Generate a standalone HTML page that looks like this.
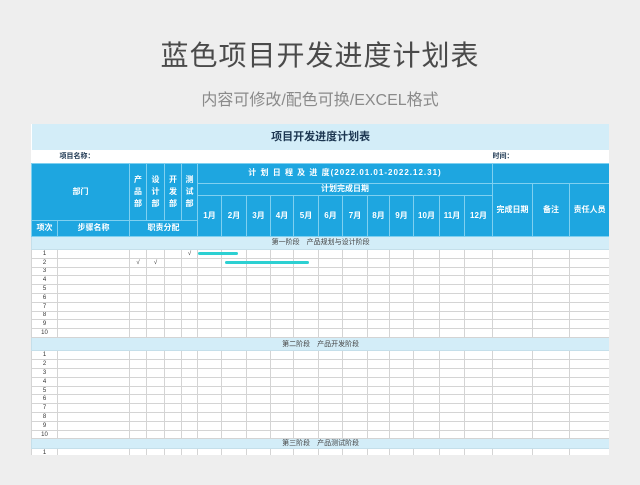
<!DOCTYPE html>
<html><head><meta charset="utf-8">
<style>
*{margin:0;padding:0;box-sizing:border-box}
body{width:640px;height:485px;background:#eeeeee;font-family:"Liberation Sans","Noto Sans CJK SC",sans-serif;position:relative;overflow:hidden}
.h1{position:absolute;top:34px;left:0;width:640px;text-align:center;font-size:28px;color:#4a4a4a;letter-spacing:1px}
.h2{position:absolute;top:86px;left:0;width:640px;text-align:center;font-size:16px;color:#8a8a8a}
.wrap{position:absolute;left:31px;top:124px;width:578px;height:331px;overflow:hidden}
table{border-collapse:collapse;table-layout:fixed;width:578px;background:#fff}
td{padding:0;overflow:hidden;white-space:nowrap;text-align:center;font-size:6px;color:#333;border:1px solid #d4d4d4;line-height:1}
.t td{background:#d3edf8;border:none;font-size:11px;font-weight:bold;color:#1b3550;height:26px}
.i td{border:none;font-size:7px;font-weight:bold;color:#1b3550;height:13px;text-align:left}
.b td,td.b{background:#1ea6e0;color:#fff;font-weight:bold;border:1px solid #7fd0f0;font-size:8px}
.s td{background:#d3edf8;height:13.5px;border-color:#c5dfea;font-size:7px;color:#444}
.s.last td{height:10px}
.r td{height:8.8px;font-size:6px}
.bar{position:absolute;height:3px;background:#2cd0d2;border-radius:2px}
</style></head><body>
<div class="h1">蓝色项目开发进度计划表</div>
<div class="h2">内容可修改/配色可换/EXCEL格式</div>
<div class="wrap">
<table>
<colgroup><col style="width:26px"><col style="width:72px"><col style="width:17px"><col style="width:18px"><col style="width:17px"><col style="width:16px">
<col style="width:24px"><col style="width:25px"><col style="width:24px"><col style="width:23px"><col style="width:25px"><col style="width:24px"><col style="width:25px"><col style="width:22px"><col style="width:24px"><col style="width:26px"><col style="width:25px"><col style="width:28px">
<col style="width:40px"><col style="width:37px"><col style="width:40px"></colgroup>
<tr class="t"><td colspan="21">项目开发进度计划表</td></tr>
<tr class="i"><td></td><td colspan="17">&nbsp;项目名称：</td><td colspan="3">时间：</td></tr>
<tr class="b" style="height:20px"><td colspan="2" rowspan="3">部门</td><td rowspan="3" style="line-height:1.5">产<br>品<br>部</td><td rowspan="3" style="line-height:1.5">设<br>计<br>部</td><td rowspan="3" style="line-height:1.5">开<br>发<br>部</td><td rowspan="3" style="line-height:1.5">测<br>试<br>部</td><td colspan="12" style="letter-spacing:1px">计 划 日 程 及 进 度(2022.01.01-2022.12.31)</td><td colspan="3"></td></tr>
<tr class="b" style="height:12px"><td colspan="12">计划完成日期</td><td rowspan="3">完成日期</td><td rowspan="3">备注</td><td rowspan="3">责任人员</td></tr>
<tr class="b" style="height:25px"><td rowspan="2">1月</td><td rowspan="2">2月</td><td rowspan="2">3月</td><td rowspan="2">4月</td><td rowspan="2">5月</td><td rowspan="2">6月</td><td rowspan="2">7月</td><td rowspan="2">8月</td><td rowspan="2">9月</td><td rowspan="2">10月</td><td rowspan="2">11月</td><td rowspan="2">12月</td></tr>
<tr class="b" style="height:16px"><td>项次</td><td>步骤名称</td><td colspan="4">职责分配</td></tr>
<tr class="s"><td colspan="21">第一阶段　产品规划与设计阶段</td></tr>
<tr class="r"><td>1</td><td></td><td></td><td></td><td></td><td>√</td><td></td><td></td><td></td><td></td><td></td><td></td><td></td><td></td><td></td><td></td><td></td><td></td><td></td><td></td><td></td></tr>
<tr class="r"><td>2</td><td></td><td>√</td><td>√</td><td></td><td></td><td></td><td></td><td></td><td></td><td></td><td></td><td></td><td></td><td></td><td></td><td></td><td></td><td></td><td></td><td></td></tr>
<tr class="r"><td>3</td><td></td><td></td><td></td><td></td><td></td><td></td><td></td><td></td><td></td><td></td><td></td><td></td><td></td><td></td><td></td><td></td><td></td><td></td><td></td><td></td></tr>
<tr class="r"><td>4</td><td></td><td></td><td></td><td></td><td></td><td></td><td></td><td></td><td></td><td></td><td></td><td></td><td></td><td></td><td></td><td></td><td></td><td></td><td></td><td></td></tr>
<tr class="r"><td>5</td><td></td><td></td><td></td><td></td><td></td><td></td><td></td><td></td><td></td><td></td><td></td><td></td><td></td><td></td><td></td><td></td><td></td><td></td><td></td><td></td></tr>
<tr class="r"><td>6</td><td></td><td></td><td></td><td></td><td></td><td></td><td></td><td></td><td></td><td></td><td></td><td></td><td></td><td></td><td></td><td></td><td></td><td></td><td></td><td></td></tr>
<tr class="r"><td>7</td><td></td><td></td><td></td><td></td><td></td><td></td><td></td><td></td><td></td><td></td><td></td><td></td><td></td><td></td><td></td><td></td><td></td><td></td><td></td><td></td></tr>
<tr class="r"><td>8</td><td></td><td></td><td></td><td></td><td></td><td></td><td></td><td></td><td></td><td></td><td></td><td></td><td></td><td></td><td></td><td></td><td></td><td></td><td></td><td></td></tr>
<tr class="r"><td>9</td><td></td><td></td><td></td><td></td><td></td><td></td><td></td><td></td><td></td><td></td><td></td><td></td><td></td><td></td><td></td><td></td><td></td><td></td><td></td><td></td></tr>
<tr class="r"><td>10</td><td></td><td></td><td></td><td></td><td></td><td></td><td></td><td></td><td></td><td></td><td></td><td></td><td></td><td></td><td></td><td></td><td></td><td></td><td></td><td></td></tr>
<tr class="s"><td colspan="21">第二阶段　产品开发阶段</td></tr>
<tr class="r"><td>1</td><td></td><td></td><td></td><td></td><td></td><td></td><td></td><td></td><td></td><td></td><td></td><td></td><td></td><td></td><td></td><td></td><td></td><td></td><td></td><td></td></tr>
<tr class="r"><td>2</td><td></td><td></td><td></td><td></td><td></td><td></td><td></td><td></td><td></td><td></td><td></td><td></td><td></td><td></td><td></td><td></td><td></td><td></td><td></td><td></td></tr>
<tr class="r"><td>3</td><td></td><td></td><td></td><td></td><td></td><td></td><td></td><td></td><td></td><td></td><td></td><td></td><td></td><td></td><td></td><td></td><td></td><td></td><td></td><td></td></tr>
<tr class="r"><td>4</td><td></td><td></td><td></td><td></td><td></td><td></td><td></td><td></td><td></td><td></td><td></td><td></td><td></td><td></td><td></td><td></td><td></td><td></td><td></td><td></td></tr>
<tr class="r"><td>5</td><td></td><td></td><td></td><td></td><td></td><td></td><td></td><td></td><td></td><td></td><td></td><td></td><td></td><td></td><td></td><td></td><td></td><td></td><td></td><td></td></tr>
<tr class="r"><td>6</td><td></td><td></td><td></td><td></td><td></td><td></td><td></td><td></td><td></td><td></td><td></td><td></td><td></td><td></td><td></td><td></td><td></td><td></td><td></td><td></td></tr>
<tr class="r"><td>7</td><td></td><td></td><td></td><td></td><td></td><td></td><td></td><td></td><td></td><td></td><td></td><td></td><td></td><td></td><td></td><td></td><td></td><td></td><td></td><td></td></tr>
<tr class="r"><td>8</td><td></td><td></td><td></td><td></td><td></td><td></td><td></td><td></td><td></td><td></td><td></td><td></td><td></td><td></td><td></td><td></td><td></td><td></td><td></td><td></td></tr>
<tr class="r"><td>9</td><td></td><td></td><td></td><td></td><td></td><td></td><td></td><td></td><td></td><td></td><td></td><td></td><td></td><td></td><td></td><td></td><td></td><td></td><td></td><td></td></tr>
<tr class="r"><td>10</td><td></td><td></td><td></td><td></td><td></td><td></td><td></td><td></td><td></td><td></td><td></td><td></td><td></td><td></td><td></td><td></td><td></td><td></td><td></td><td></td></tr>
<tr class="s last"><td colspan="21">第三阶段　产品测试阶段</td></tr>
<tr class="r"><td>1</td><td></td><td></td><td></td><td></td><td></td><td></td><td></td><td></td><td></td><td></td><td></td><td></td><td></td><td></td><td></td><td></td><td></td><td></td><td></td><td></td></tr>
</table>
</div>
<div class="bar" style="left:198px;top:252px;width:40px"></div>
<div class="bar" style="left:225px;top:261px;width:84px"></div>
</body></html>
